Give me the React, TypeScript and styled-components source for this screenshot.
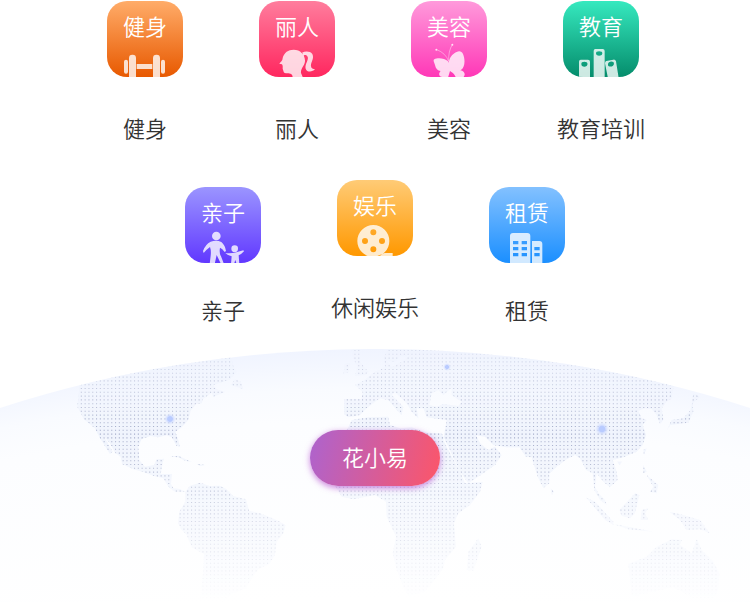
import React from "react";
import styled, { createGlobalStyle } from "styled-components";

const GlobalStyle = createGlobalStyle`
  body {
    margin: 0;
    background: #fff;
    font-family: "Noto Sans CJK SC", "Noto Sans", sans-serif;
    font-weight: 350;
  }
`;

const Page = styled.main`
  overflow: hidden;
`;

const CategoryRow = styled.nav<{ $top: number; $right?: number }>`
  display: flex;
  justify-content: center;
  align-items: flex-start;
  padding: ${(p) => p.$top}px ${(p) => p.$right ?? 0}px 0 0;
`;

const Category = styled.a<{ $gap: number; $drop?: number }>`
  display: flex;
  flex-direction: column;
  align-items: center;
  gap: ${(p) => p.$gap}px;
  width: 152px;
  padding-top: ${(p) => p.$drop ?? 0}px;
  color: #333;
  text-decoration: none;
`;

const Tile = styled.span<{ $from: string; $to: string }>`
  display: flex;
  flex-direction: column;
  align-items: center;
  gap: 2px;
  box-sizing: border-box;
  width: 76px;
  height: 76px;
  padding-top: 8px;
  border-radius: 20px;
  overflow: hidden;
  background: linear-gradient(${(p) => p.$from}, ${(p) => p.$to});
`;

const TileTitle = styled.span`
  color: #fff;
  font-size: 22px;
  line-height: 32px;
`;

const TileArt = styled.svg`
  display: block;
  width: 76px;
  height: 34px;
  fill: rgba(255, 255, 255, 0.8);
`;

const Label = styled.span`
  font-size: 22px;
  line-height: 32px;
  white-space: nowrap;
`;

const Globe = styled.section`
  display: grid;
  margin-top: 24px;
`;

const GlobeArt = styled.svg`
  grid-area: 1 / 1;
  display: block;
  width: 100%;
`;

const BrandButton = styled.button`
  grid-area: 1 / 1;
  justify-self: center;
  align-self: start;
  margin-top: 81px;
  padding: 10px 32px 14px;
  border: 0;
  border-radius: 28px;
  background: linear-gradient(105deg, #ae63cd 2%, #fb566a 98%);
  box-shadow: 0 2px 6px rgba(170, 50, 200, 0.6);
  color: #fff;
  font-family: inherit;
  font-weight: 350;
  font-size: 22px;
  line-height: 32px;
  cursor: pointer;
`;

type Item = {
  title: string;
  label: string;
  from: string;
  to: string;
  gap: number;
  drop?: number;
  viewBox: string;
  art: React.ReactNode;
};

const firstRow: Item[] = [
  {
    title: "健身",
    label: "健身",
    from: "#ffac69",
    to: "#e85900",
    gap: 34,
    viewBox: "21 129 228 102",
    art: (
      <>
        <rect x="72" y="179" width="12" height="42" rx="6" />
        <rect x="87" y="164" width="21" height="76" rx="10" />
        <rect x="110" y="192" width="47" height="15" />
        <rect x="159" y="164" width="21" height="76" rx="10" />
        <rect x="183" y="179" width="12" height="42" rx="6" />
      </>
    ),
  },
  {
    title: "丽人",
    label: "丽人",
    from: "#ff7d9d",
    to: "#ff275f",
    gap: 34,
    viewBox: "27 129 228 102",
    art: (
      <>
        <path d="M98 174C103 157 114 149 131 149C151 149 166 164 165 184C164 197 151 207 153 219L159 233H128C128 220 119 220 108 220C99 219 101 211 98 207C98 200 99 197 96 193L88 191C90 187 98 183 98 174Z" />
        <path d="M156 158C166 153 180 153 187 162C194 175 181 189 183 199C184 206 189 208 195 208C187 217 170 217 167 206C163 193 179 178 172 169C168 163 162 165 159 169C160 165 159 161 156 158Z" />
      </>
    ),
  },
  {
    title: "美容",
    label: "美容",
    from: "#ff9adb",
    to: "#ff38b7",
    gap: 34,
    viewBox: "33 129 228 102",
    art: (
      <>
        <path d="M144 184C134 174 112 173 103 178C98 181 103 187 105 195C107 206 113 212 122 213C112 224 120 232 131 231L144 233L150 213C155 216 163 221 167 231L187 235C199 225 195 214 181 211C196 203 196 178 189 162C184 149 171 153 163 160C153 167 149 174 147 184L145 188Z" />
        <path
          d="M110 149C127 155 140 167 146 184M157 134C149 146 145 164 146 184"
          fill="none"
          stroke="rgba(255,255,255,.6)"
          strokeWidth="2"
        />
        <circle cx="109" cy="149" r="3" />
        <circle cx="157" cy="134" r="3" />
      </>
    ),
  },
  {
    title: "教育",
    label: "教育培训",
    from: "#36e9bf",
    to: "#058d6c",
    gap: 34,
    viewBox: "39 129 228 102",
    art: (
      <g fillRule="evenodd">
        <path d="M92 179H114Q120 179 120 185V234H87V185Q87 179 92 179ZM96 187Q92 192 96 198Q103 202 110 198Q115 192 110 187Q103 184 96 187Z" />
        <path d="M136 147H158Q164 147 164 153V234H131V153Q131 147 136 147ZM140 155Q136 160 140 165Q147 169 155 165Q159 160 155 155Q147 152 140 155Z" />
        <path d="M169 183L190 179Q196 178 198 184L207 240H175L165 190Q165 184 169 183ZM177 187Q172 192 175 198Q183 202 189 197Q194 192 190 186Q183 183 177 187Z" />
      </g>
    ),
  },
];

const secondRow: Item[] = [
  {
    title: "亲子",
    label: "亲子",
    from: "#9b95ff",
    to: "#6138ff",
    gap: 30,
    drop: 7,
    viewBox: "30 162 228 102",
    art: (
      <>
        <circle cx="124" cy="183" r="13" />
        <path d="M107 200Q124 194 139 201Q150 210 153 228L149 231Q142 221 135 218Q132 234 138 244L147 267H138L125 240L119 267H104L107 242Q109 227 105 216Q95 223 86 234L84 228Q91 208 107 200Z" />
        <circle cx="179" cy="221" r="10" />
        <path d="M151 234Q168 236 184 232L205 226L207 229Q199 238 191 241L193 267H185L181 255L177 267H168L170 244Q158 241 151 234Z" />
      </>
    ),
  },
  {
    title: "娱乐",
    label: "休闲娱乐",
    from: "#ffcb76",
    to: "#ff9800",
    gap: 34,
    viewBox: "36 141 228 102",
    art: (
      <path
        fillRule="evenodd"
        d="M145 150A48 48 0 1 1 145 246A48 48 0 1 1 145 150ZM145 163A9 9 0 1 0 145 181A9 9 0 1 0 145 163ZM120 189A9 9 0 1 0 120 207A9 9 0 1 0 120 189ZM171 189A9 9 0 1 0 171 207A9 9 0 1 0 171 189ZM145 214A9 9 0 1 0 145 232A9 9 0 1 0 145 214ZM179 234H203V246H150Z"
      />
    ),
  },
  {
    title: "租赁",
    label: "租赁",
    from: "#83c1ff",
    to: "#1b8fff",
    gap: 30,
    drop: 7,
    viewBox: "27 162 228 102",
    art: (
      <path
        fillRule="evenodd"
        d="M99 174H142Q151 174 151 183V266H90V183Q90 174 99 174ZM156 198H178Q187 198 187 207V266H156ZM99 198V208H115V198ZM125 198V208H141V198ZM99 216V226H115V216ZM125 216V226H141V216ZM99 234V244H115V234ZM125 234V244H141V234ZM163 216V226H179V216ZM163 234V244H179V234Z"
      />
    ),
  },
];

const americas =
  "M238 140L232 200L252 238L285 265L300 295L315 318L330 342L338 335L312 290L330 310L345 338L362 350L366 372L400 388L430 396L462 408L490 415L505 440L525 455L555 455L540 447L520 445L513 432L516 402L482 402L488 368L492 356L470 358L462 375L435 380L418 360L415 320L425 297L452 288L475 292L500 286L516 292L528 316L540 322L535 300L526 275L545 262L565 240L572 212L588 192L605 190L608 178L635 158L640 170L675 156L650 148L640 135L670 125L690 118L710 95L700 78L690 40H238Z" +
  "M692 135L705 118L722 125L730 147Z" +
  "M510 350L535 347L575 366L555 362L535 352ZM590 372L618 375L600 378Z" +
  "M556 455L570 437L600 428L630 438L660 437L680 448L700 468L738 478L747 512L780 520L830 540L857 555L850 580L830 605L825 645L808 672L775 688L755 715L740 745L700 760L660 790H600L605 740L610 690L612 642L575 622L560 585L545 570L534 550L538 515L556 485Z";

const europeAfrica =
  "M252 177H305L308 155L285 135L310 122L345 95L375 82L372 50L390 20H1260L1235 175L1220 185L1205 205L1210 240L1200 252L1190 225L1175 207L1155 205L1135 212L1145 235L1160 240L1148 255L1158 285L1148 315L1130 335L1090 352L1058 360L1070 395L1073 420L1050 442L1030 425L1010 400L1005 440L1015 460L1035 480L1040 495L1020 480L1003 450L998 400L978 390L960 355L945 345L920 358L890 380L868 402V430L850 445L835 415L820 370L815 352L798 350L778 322H740L700 315L675 290L648 286L660 310L685 330L705 320L725 345L705 375L670 400L625 430L600 395L570 340L550 300L560 240L500 232L490 205L470 205L475 235L455 215L440 190L405 157L395 165L430 200L425 225L410 210L385 180L360 175L345 185L320 205L300 225L265 232L252 222Z" +
  "M508 195L515 160L535 150L550 165L575 143V165L605 185L595 198L550 192L530 200Z" +
  "M380 62L395 82L430 62L450 45L420 48L405 65Z" +
  "M275 25H300V65L325 95L315 105L285 108L292 80L278 50ZM250 100L255 72L270 68L265 98Z" +
  "M265 262L275 240L325 232L385 230L390 255L420 265L455 262L500 278L545 280L560 310L600 395L615 430L668 425L660 455L630 495L595 520L582 550L588 620L555 660L550 685L520 725L495 755L445 770L430 740L410 690L398 640L408 590L380 530L378 485L345 465L280 478L245 470L220 430L200 380L225 320Z" +
  "M655 595L665 620L640 692L620 690L625 635Z";

const islands =
  "M640 160L660 170L638 190L640 215L625 248L570 255L560 272L575 240L610 235L632 210Z" +
  "M212 445L222 455L215 465ZM412 365H426L418 376Z" +
  "M318 472L345 485L400 545V555L375 540ZM400 552L445 560L520 575L445 568Z" +
  "M418 510L465 460L478 465L465 520L450 535L425 528ZM485 510L505 505L495 520L505 540H482Z" +
  "M490 330L500 325L492 345ZM490 375L500 395L490 400ZM500 405L535 435L530 460L510 455L520 440Z" +
  "M568 515L610 525L660 540L690 580L660 568L620 570L600 540Z" +
  "M445 672L500 650L530 620L575 598L605 600L600 615L635 640L650 597L665 630L700 665L718 700L715 750L700 780H650L580 742L520 755L455 770L448 700Z";

// Spacing between the dots that fill the continents, in drawing units.
const DOT_PITCH = 3.8;
const dotLines = Array.from({ length: 67 }, (_, i) => `M77 ${(i * DOT_PITCH + 1.5).toFixed(1)}H750`).join("");

const markers = [
  { x: 170, y: 70, r: 6 },
  { x: 602, y: 80, r: 7 },
  { x: 447, y: 18, r: 4 },
];

function WorldMap() {
  return (
    <GlobeArt viewBox="0 0 750 253" aria-hidden="true">
      <defs>
        <radialGradient id="sky" gradientUnits="userSpaceOnUse" cx="375" cy="1800" r="1800">
          <stop offset="0.86" stopColor="#ffffff" />
          <stop offset="0.96" stopColor="#fcfdff" />
          <stop offset="0.978" stopColor="#f9fbff" />
          <stop offset="1" stopColor="#f0f4ff" />
        </radialGradient>
        <linearGradient id="fade" x1="0" y1="0" x2="0" y2="1">
          <stop offset="0" stopColor="#fff" stopOpacity="0.3" />
          <stop offset="0.25" stopColor="#fff" stopOpacity="0.8" />
          <stop offset="0.33" stopColor="#fff" />
          <stop offset="0.45" stopColor="#fff" stopOpacity="0.8" />
          <stop offset="0.7" stopColor="#fff" stopOpacity="0.4" />
          <stop offset="1" stopColor="#fff" stopOpacity="0" />
        </linearGradient>
        <mask id="fadeMask" maskUnits="userSpaceOnUse" x="0" y="0" width="750" height="253">
          <rect width="750" height="253" fill="url(#fade)" />
        </mask>
        <clipPath id="dome">
          <path d="M0 59A1221 1221 0 0 1 750 59V253H0Z" />
        </clipPath>
        <clipPath id="land">
          <path clipRule="evenodd" transform="translate(0 -9) scale(.33333)" d={americas} />
          <path clipRule="evenodd" transform="translate(260 -9) scale(.33333)" d={europeAfrica} />
          <path clipRule="evenodd" transform="translate(480 -9) scale(.33333)" d={islands} />
        </clipPath>
        <radialGradient id="glow">
          <stop offset="0.4" stopColor="#b9cbff" />
          <stop offset="0.55" stopColor="#c9d7ff" stopOpacity="0.7" />
          <stop offset="1" stopColor="#dbe4ff" stopOpacity="0" />
        </radialGradient>
      </defs>
      <g clipPath="url(#dome)">
        <rect width="750" height="253" fill="url(#sky)" />
        <g mask="url(#fadeMask)">
          <g clipPath="url(#land)">
            <rect width="750" height="253" fill="#f0f4fd" />
            <path d={dotLines} stroke="#a3abc9" strokeWidth="1.1" strokeDasharray="1.1 2.7" />
          </g>
        </g>
        {markers.map((m) => (
          <circle key={m.x} cx={m.x} cy={m.y} r={m.r} fill="url(#glow)" />
        ))}
      </g>
    </GlobeArt>
  );
}

function CategoryLink({ item }: { item: Item }) {
  return (
    <Category href="#" $gap={item.gap} $drop={item.drop}>
      <Tile $from={item.from} $to={item.to}>
        <TileTitle>{item.title}</TileTitle>
        <TileArt viewBox={item.viewBox} aria-hidden="true">
          {item.art}
        </TileArt>
      </Tile>
      <Label>{item.label}</Label>
    </Category>
  );
}

export default function App() {
  return (
    <Page>
      <GlobalStyle />
      <CategoryRow $top={1} $right={4}>
        {firstRow.map((item) => (
          <CategoryLink key={item.label} item={item} />
        ))}
      </CategoryRow>
      <CategoryRow $top={37}>
        {secondRow.map((item) => (
          <CategoryLink key={item.label} item={item} />
        ))}
      </CategoryRow>
      <Globe>
        <WorldMap />
        <BrandButton type="button">花小易</BrandButton>
      </Globe>
    </Page>
  );
}
